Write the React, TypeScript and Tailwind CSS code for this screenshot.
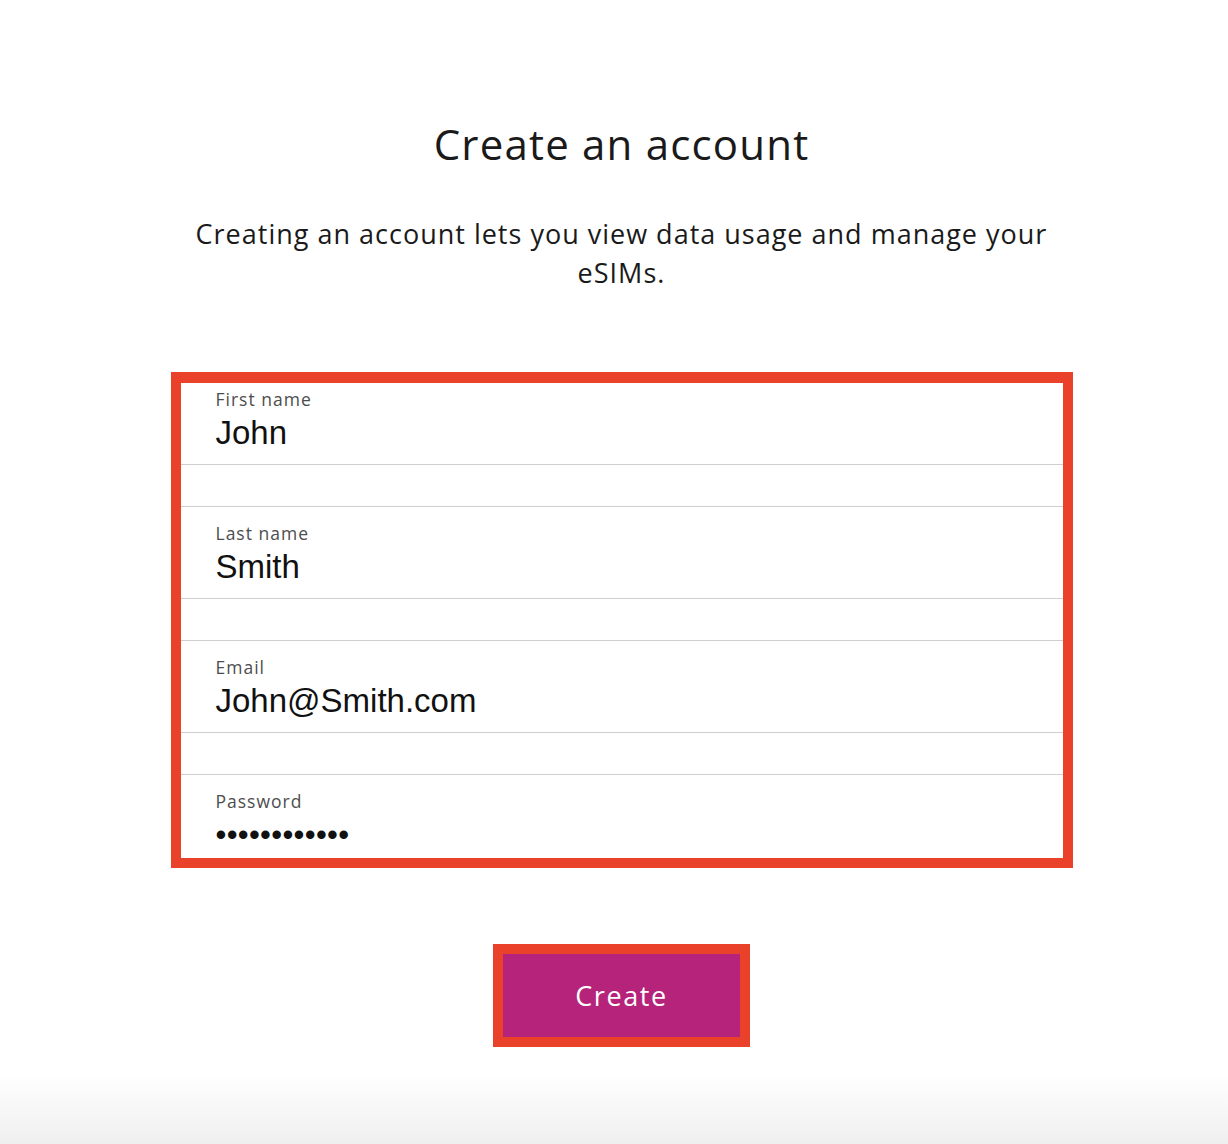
import React from "react";

const fields = [
  { label: "First name", value: "John" },
  { label: "Last name", value: "Smith" },
  { label: "Email", value: "John@Smith.com" },
  { label: "Password", value: "••••••••••••", dots: true },
];

export default function App() {
  return (
    <div className="relative min-h-[1144px] w-full bg-white overflow-hidden" style={{ fontFamily: '"Open Sans", "Noto Sans", sans-serif' }}>
      <div className="flex flex-col items-center pl-[15px] pt-[119px]">
        <h1 className="text-[42px] leading-[50px] font-normal text-[#1a1a1a] tracking-[1.2px]">Create an account</h1>
        <p className="mt-[45px] text-center text-[27px] leading-[39px] text-[#1a1a1a] tracking-[1px]">
          Creating an account lets you view data usage and manage your
          <br />
          eSIMs.
        </p>
        <div className="mt-[80px] w-[902px] h-[496px] border-[10px] border-t-[11px] border-[#e9412a] overflow-hidden">
          <div className="-mt-[11px] flex flex-col gap-[41px]">
            {fields.map((f) => (
              <div key={f.label} className="h-[93px] shrink-0 border-y border-[#cfcfcf] pl-[35px] pt-[15px]">
                <div className="text-[17.5px] leading-[22px] text-[#4d4d4d] tracking-[1px]">{f.label}</div>
                <div
                  className={
                    f.dots
                      ? "mt-[6px] text-[31px] leading-[34px] tracking-[0.3px] text-[#111111]"
                      : "mt-[6px] text-[33px] leading-[34px] text-[#111111]"
                  }
                  style={{ fontFamily: '"Liberation Sans", Arial, sans-serif' }}
                >
                  {f.value}
                </div>
              </div>
            ))}
          </div>
        </div>
        <div className="mt-[76px] border-[10px] border-[#e9412a]">
          <button className="w-[237px] h-[83px] pt-[2px] bg-[#b5247a] text-white text-[27px] tracking-[1.6px] flex items-center justify-center">
            Create
          </button>
        </div>
      </div>
      <div className="absolute bottom-0 left-0 right-0 h-[70px] bg-gradient-to-b from-white to-[#efefef]" />
    </div>
  );
}
